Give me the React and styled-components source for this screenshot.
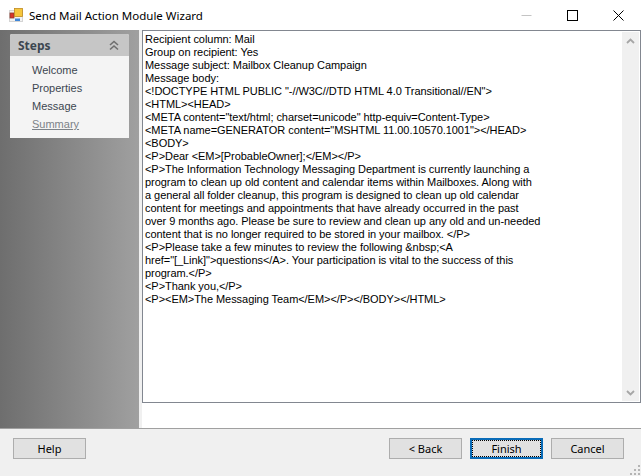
import React from 'react'
import styled, { createGlobalStyle } from 'styled-components'

const GlobalStyle = createGlobalStyle`
    html, body {
        margin: 0;
        padding: 0;
        background: #f0f0f0;
    }
    body {
        font-family: "Noto Sans", "Liberation Sans", Arial, sans-serif;
        color: #000;
    }
`

const messageLines = [
    'Recipient column: Mail',
    'Group on recipient: Yes',
    'Message subject: Mailbox Cleanup Campaign',
    'Message body:',
    '<!DOCTYPE HTML PUBLIC "-//W3C//DTD HTML 4.0 Transitional//EN">',
    '<HTML><HEAD>',
    '<META content="text/html; charset=unicode" http-equiv=Content-Type>',
    '<META name=GENERATOR content="MSHTML 11.00.10570.1001"></HEAD>',
    '<BODY>',
    '<P>Dear <EM>[ProbableOwner];</EM></P>',
    '<P>The Information Technology Messaging Department is currently launching a',
    'program to clean up old content and calendar items within Mailboxes. Along with',
    'a general all folder cleanup, this program is designed to clean up old calendar',
    'content for meetings and appointments that have already occurred in the past',
    'over 9 months ago. Please be sure to review and clean up any old and un-needed',
    'content that is no longer required to be stored in your mailbox. </P>',
    '<P>Please take a few minutes to review the following &nbsp;<A',
    'href="[_Link]">questions</A>. Your participation is vital to the success of this',
    'program.</P>',
    '<P>Thank you,</P>',
    '<P><EM>The Messaging Team</EM></P></BODY></HTML>',
]

const steps = [
    { label: 'Welcome' },
    { label: 'Properties' },
    { label: 'Message' },
    { label: 'Summary', current: true },
]

function App() {
    return (
        <>
            <GlobalStyle />
            <Wizard>
                <TitleBar>
                    <AppIcon viewBox="0 0 14 14">
                        <rect x="0.5" y="2.5" width="13" height="11" fill="#f2f2f2" stroke="#d4d4d4" />
                        <rect x="1" y="5" width="4" height="5" fill="#d8352a" stroke="#8c3a2c" strokeWidth="0.8" />
                        <rect x="5.5" y="0.5" width="8" height="8" fill="#f6c63c" stroke="#c08a20" strokeWidth="0.8" />
                        <rect x="6" y="10.5" width="5" height="2.5" fill="#3f86d8" />
                    </AppIcon>
                    <Title>Send Mail Action Module Wizard</Title>
                    <WindowButtons>
                        <WindowButton>
                            <svg width="11" height="11" viewBox="0 0 11 11">
                                <path d="M0.5 5.5H10.5" stroke="#c4c4c4" strokeWidth="1" />
                            </svg>
                        </WindowButton>
                        <WindowButton>
                            <svg width="11" height="11" viewBox="0 0 11 11">
                                <rect x="0.5" y="0.5" width="10" height="10" fill="none" stroke="#000" />
                            </svg>
                        </WindowButton>
                        <WindowButton>
                            <svg width="11" height="11" viewBox="0 0 11 11">
                                <path d="M0.5 0.5L10.5 10.5M10.5 0.5L0.5 10.5" stroke="#000" strokeWidth="1" />
                            </svg>
                        </WindowButton>
                    </WindowButtons>
                </TitleBar>
                <Main>
                    <SidePane>
                        <StepsPanel>
                            <StepsHeader>
                                Steps
                                <svg width="10" height="11" viewBox="0 0 10 11">
                                    <path d="M1 5L5 1.5L9 5M1 9.5L5 6L9 9.5" fill="none" stroke="#6f6f6f" strokeWidth="1.6" />
                                </svg>
                            </StepsHeader>
                            <StepsList>
                                {steps.map((step) => (
                                    <StepItem key={step.label} $current={step.current}>{step.label}</StepItem>
                                ))}
                            </StepsList>
                        </StepsPanel>
                    </SidePane>
                    <Divider />
                    <Content>
                        <MessageBox>
                            <MessageText>
                                {messageLines.map((line, i) => (
                                    <MessageLine key={i}>{line}</MessageLine>
                                ))}
                            </MessageText>
                            <ScrollBar>
                                <ScrollArrow>
                                    <svg width="9" height="6" viewBox="0 0 9 6">
                                        <path d="M1 5L4.5 1.5L8 5" fill="none" stroke="#a6a6a6" strokeWidth="1.8" />
                                    </svg>
                                </ScrollArrow>
                                <ScrollArrow>
                                    <svg width="9" height="6" viewBox="0 0 9 6">
                                        <path d="M1 1L4.5 4.5L8 1" fill="none" stroke="#a6a6a6" strokeWidth="1.8" />
                                    </svg>
                                </ScrollArrow>
                            </ScrollBar>
                        </MessageBox>
                    </Content>
                </Main>
                <Footer>
                    <Button>Help</Button>
                    <Spacer />
                    <Button>&lt; Back</Button>
                    <Button $primary><FocusRing>Finish</FocusRing></Button>
                    <Button>Cancel</Button>
                    <Grip>
                        <svg width="10" height="10" viewBox="0 0 10 10" fill="#b4b4b4">
                            <rect x="8" y="0" width="2" height="2" />
                            <rect x="4" y="4" width="2" height="2" />
                            <rect x="8" y="4" width="2" height="2" />
                            <rect x="0" y="8" width="2" height="2" />
                            <rect x="4" y="8" width="2" height="2" />
                            <rect x="8" y="8" width="2" height="2" />
                        </svg>
                    </Grip>
                </Footer>
            </Wizard>
        </>
    )
}

const Wizard = styled.div`
    width: 641px;
    height: 476px;
    display: flex;
    flex-direction: column;
    overflow: hidden;
    background: #f0f0f0;
`

const TitleBar = styled.div`
    height: 30px;
    flex: none;
    display: flex;
    align-items: center;
    padding-left: 9px;
    background: #fff;
`

const AppIcon = styled.svg`
    width: 14px;
    height: 14px;
    flex: none;
`

const Title = styled.span`
    margin-left: 6px;
    font-size: 11.5px;
`

const WindowButtons = styled.div`
    margin-left: auto;
    display: flex;
`

const WindowButton = styled.div`
    width: 46px;
    height: 30px;
    display: flex;
    align-items: center;
    justify-content: center;
`

const Main = styled.div`
    flex: 1;
    min-height: 0;
    display: flex;
`

const SidePane = styled.div`
    width: 139px;
    flex: none;
    box-sizing: border-box;
    padding: 4px 10px 0;
    background: linear-gradient(to right, #6e6e6e, #a0a0a0);
`

const StepsPanel = styled.div`
    width: 119px;
    background: #f4f4f4;
    border-radius: 2px 2px 0 0;
`

const StepsHeader = styled.div`
    height: 22px;
    display: flex;
    align-items: center;
    justify-content: space-between;
    padding: 0 10px 0 8px;
    background: #c6c6c6;
    border-radius: 2px 2px 0 0;
    font-size: 12px;
    font-weight: bold;
    color: #3c4650;
`

const StepsList = styled.ul`
    list-style: none;
    margin: 0;
    padding: 5px 0 5px 22px;
`

const StepItem = styled.li`
    height: 18px;
    line-height: 18px;
    font-family: "Liberation Sans", Arial, sans-serif;
    font-size: 11px;
    color: ${(props) => (props.$current ? '#7c8288' : '#3c4650')};
    text-decoration: ${(props) => (props.$current ? 'underline' : 'none')};
`

const Divider = styled.div`
    width: 3px;
    flex: none;
    background: #f0f0f0;
`

const Content = styled.div`
    flex: 1;
    min-width: 0;
    padding-bottom: 25px;
    background: #fff;
`

const MessageBox = styled.div`
    height: 100%;
    box-sizing: border-box;
    display: flex;
    padding: 1px;
    border: 1px solid #828790;
    background: #fff;
`

const MessageText = styled.div`
    flex: 1;
    min-width: 0;
    padding: 1px 0 0 1px;
    font-family: "Liberation Sans", Arial, sans-serif;
    font-size: 11px;
    letter-spacing: -0.05px;
    line-height: 13px;
`

const MessageLine = styled.div`
    height: 13px;
    white-space: pre;
`

const ScrollBar = styled.div`
    width: 17px;
    flex: none;
    display: flex;
    flex-direction: column;
    justify-content: space-between;
    background: #f0f0f0;
`

const ScrollArrow = styled.div`
    height: 17px;
    display: flex;
    align-items: center;
    justify-content: center;
`

const Footer = styled.div`
    position: relative;
    height: 48px;
    flex: none;
    box-sizing: border-box;
    display: flex;
    align-items: flex-start;
    gap: 8px;
    padding: 9px 17px 0 13px;
    border-top: 1px solid #a0a0a0;
    background: #f0f0f0;
`

const Spacer = styled.div`
    flex: 1;
`

const Button = styled.div`
    width: 73px;
    height: 21px;
    box-sizing: border-box;
    display: flex;
    align-items: center;
    justify-content: center;
    border: ${(props) => (props.$primary ? '2px solid #0a6cb8' : '1px solid #adadad')};
    background: #e1e1e1;
    font-size: 11px;
`

const FocusRing = styled.span`
    flex: 1;
    align-self: stretch;
    display: flex;
    align-items: center;
    justify-content: center;
    outline: 1px dotted #000;
    outline-offset: -1px;
`

const Grip = styled.div`
    position: absolute;
    right: 1px;
    bottom: 1px;
    display: flex;
`

export default App
